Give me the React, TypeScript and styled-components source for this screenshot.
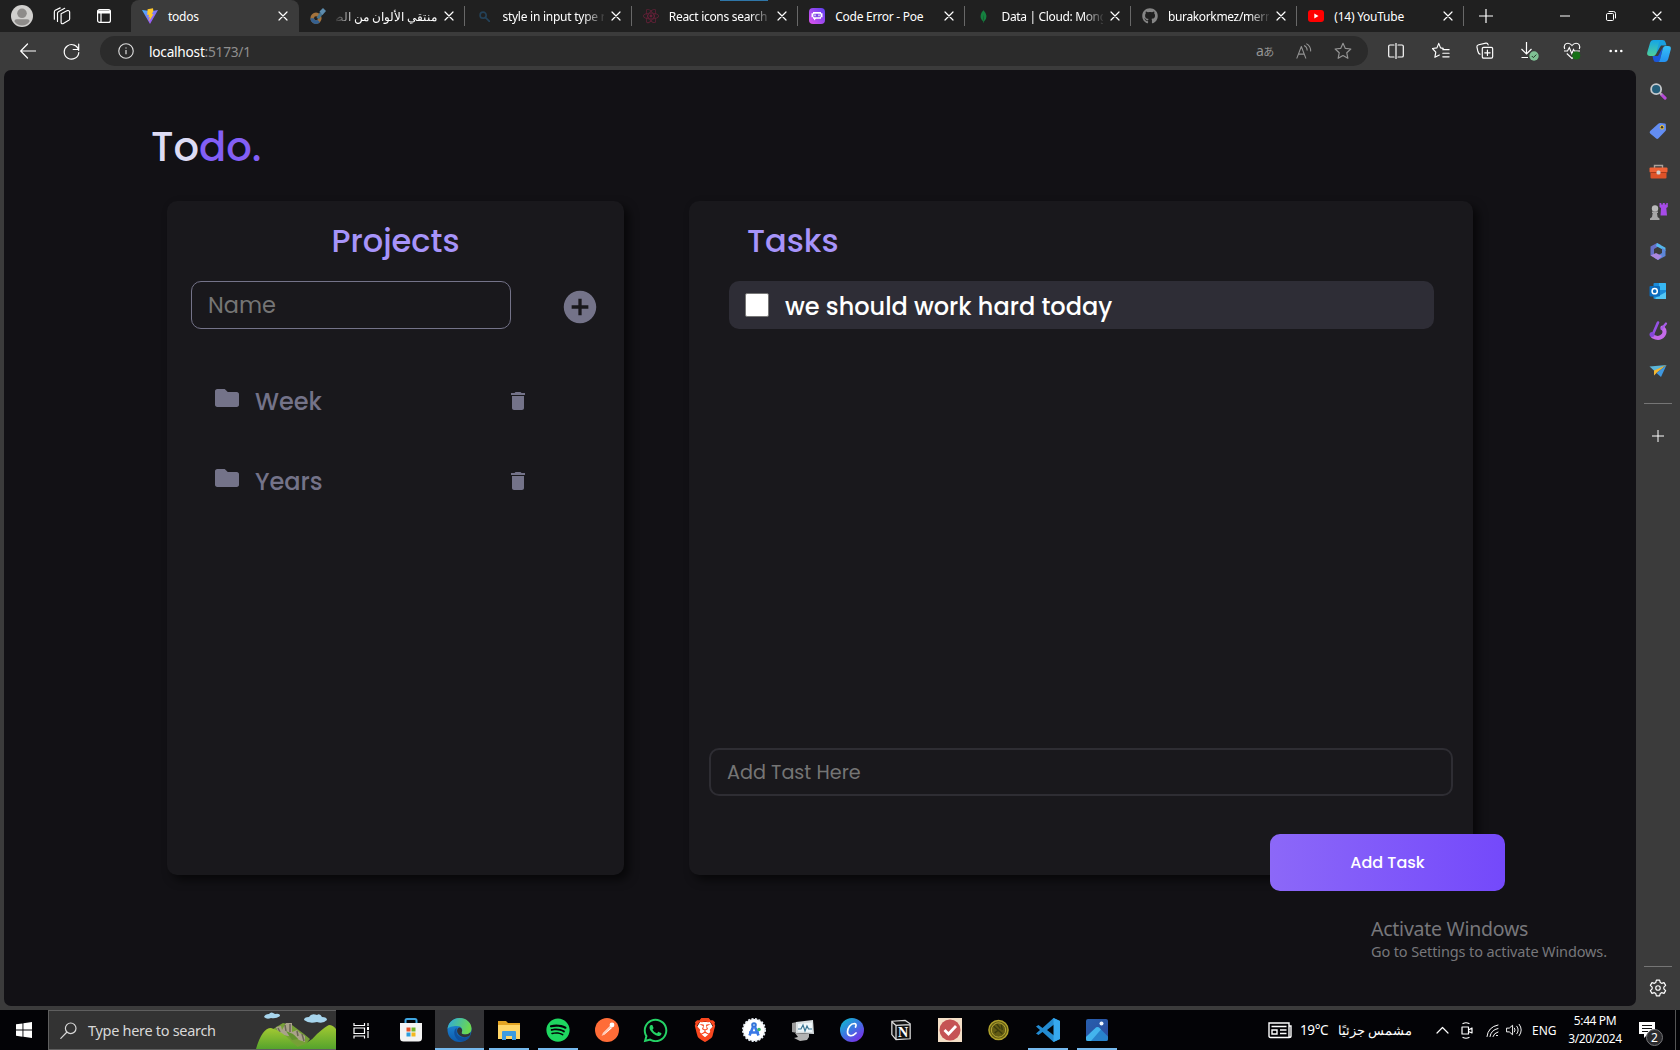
import React from "react";
import styled, { createGlobalStyle, css } from "styled-components";
import { FaFolder, FaGithub, FaSpotify, FaWhatsapp } from "react-icons/fa";
import { MdDelete } from "react-icons/md";
import { IoMdAddCircle } from "react-icons/io";
import { SiBrave, SiMongodb, SiReact } from "react-icons/si";

const ui = `"Segoe UI", "Noto Sans", "Open Sans", sans-serif`;
const geo = `Poppins, Inter, "Open Sans", sans-serif`;

const Global = createGlobalStyle`
  * { box-sizing: border-box; }
  body { margin: 0; background: #3b3b3b; overflow: hidden; }
  svg { display: block; flex: none; }
  button { border: 0; padding: 0; background: none; color: inherit; font: inherit; }
`;

const Desktop = styled.div`
  width: 1680px;
  height: 1050px;
  display: grid;
  grid-template-rows: 32px 38px 940px 40px;
  font-family: ${ui};
  color: #fff;
  background: #3b3b3b;
`;

/* ---------- browser chrome ---------- */
const TabStrip = styled.header`
  display: flex;
  align-items: stretch;
  background: #202020;
`;
const StripTools = styled.div`
  width: 131px;
  display: flex;
  align-items: center;
  padding-left: 11px;
`;
const StripIcon = styled.span<{ $gap: number }>`
  display: flex;
  margin-right: ${(p) => p.$gap}px;
`;
const TabBox = styled.div<{ $active?: boolean; $line?: boolean }>`
  width: ${(p) => (p.$active ? 168 : 166.4)}px;
  flex: none;
  display: flex;
  align-items: center;
  padding: 0 8px 0 11px;
  position: relative;
  background: ${(p) => (p.$active ? "#3b3b3b" : "transparent")};
  border-radius: 8px 8px 0 0;
  ${(p) =>
    p.$line &&
    css`
      &::after {
        content: "";
        position: absolute;
        right: 0;
        top: 6px;
        width: 1px;
        height: 20px;
        background: #686868;
      }
    `}
`;
const Favicon = styled.span`
  width: 16px;
  height: 16px;
  display: grid;
  place-items: center;
  margin-right: 10px;
`;
const TabTitle = styled.span<{ $fade?: boolean; $rtl?: boolean; $ls?: number }>`
  flex: 1;
  min-width: 0;
  padding-top: 1px;
  white-space: nowrap;
  font-size: 12px;
  line-height: 20px;
  letter-spacing: ${(p) => p.$ls ?? -0.25}px;
  direction: ${(p) => (p.$rtl ? "rtl" : "ltr")};
  ${(p) =>
    p.$fade &&
    css`
      mask-image: linear-gradient(to ${p.$rtl ? "left" : "right"}, #000 80%, rgba(0, 0, 0, 0.1) 100%);
    `}
`;
const Close = styled.button`
  width: 16px;
  height: 16px;
  margin-left: 4px;
  display: grid;
  place-items: center;
`;
const NewTab = styled.button`
  width: 44px;
  display: grid;
  place-items: center;
`;
const WindowButtons = styled.div`
  margin-left: auto;
  display: flex;
  align-items: center;
  gap: 36px;
  padding-right: 18px;
`;
const LoadBar = styled.i`
  position: absolute;
  left: 720px;
  top: 0;
  width: 48px;
  height: 1px;
  background: #2f76a8;
`;
const Toolbar = styled.nav`
  display: flex;
  align-items: center;
  background: #3b3b3b;
`;
const NavButtons = styled.div`
  width: 100px;
  display: flex;
  align-items: center;
  gap: 27px;
  padding-left: 20px;
`;
const Address = styled.div`
  width: 1268px;
  height: 30px;
  border-radius: 15px;
  background: #2b2b2b;
  display: flex;
  align-items: center;
  padding: 0 16px 0 18px;
`;
const Url = styled.span`
  margin-left: 15px;
  padding-top: 1px;
  font-size: 13.7px;
  line-height: 20px;
  letter-spacing: -0.25px;
  b { font-weight: 400; color: #fff; }
  color: #8f8f8f;
`;
const AddressTools = styled.div`
  margin-left: auto;
  display: flex;
  align-items: center;
  gap: 22px;
  color: #949494;
`;
const Translate = styled.span`
  font: 14px/16px "Noto Sans", "Noto Sans CJK JP", sans-serif;
  width: 18px;
  letter-spacing: -0.5px;
  white-space: nowrap;
  small { font-size: 11px; }
`;
const ToolIcons = styled.div`
  flex: 1;
  display: grid;
  grid-template-columns: 55px 35px 53px 38px 45px 43px 43px;
  place-items: center;
`;

/* ---------- page ---------- */
const Middle = styled.div`
  display: flex;
  padding-left: 4px;
`;
const Page = styled.main`
  width: 1632px;
  height: 936px;
  background: #121115;
  border-radius: 7px;
  padding: 47px 0 0 147px;
  font-family: ${geo};
  font-feature-settings: "cv11";
  position: relative;
`;
const Logo = styled.h1`
  margin: 0;
  height: 60px;
  font-size: 40px;
  line-height: 60px;
  font-weight: 500;
  color: #dddcf4;
  span { color: #835ff5; }
`;
const Panels = styled.div`
  display: flex;
  gap: 65px;
  padding: 24px 0 0 16px;
`;
const Panel = styled.section<{ $w: number }>`
  width: ${(p) => p.$w}px;
  height: 674px;
  border-radius: 10px;
  background: #19181c;
  box-shadow: 5px 5px 10px rgba(0, 0, 0, 0.6);
  display: flex;
  flex-direction: column;
`;
const PanelTitle = styled.h2<{ $left?: boolean }>`
  margin: 0;
  padding: ${(p) => (p.$left ? "16px 0 0 58px" : "16px 0 0")};
  height: 80px;
  text-align: ${(p) => (p.$left ? "left" : "center")};
  font-size: 32px;
  line-height: 48px;
  font-weight: 500;
  color: #a794fa;
`;
const NameRow = styled.div`
  display: flex;
  align-items: center;
  padding-left: 24px;
  gap: 49px;
  color: #747389;
`;
const Field = styled.input<{ $w: number; $border: string; $size: number }>`
  width: ${(p) => p.$w}px;
  height: 48px;
  padding: 0 16px;
  border: ${(p) => p.$border};
  border-radius: 10px;
  background: transparent;
  outline: 0;
  font-family: ${geo};
  font-size: ${(p) => p.$size}px;
  &::placeholder { color: #757575; }
`;
const AddProject = styled.button`
  margin-top: 4px;
`;
const ProjectList = styled.ul`
  list-style: none;
  margin: 32px 0 0;
  padding: 0 94px 0 48px;
`;
const Project = styled.li`
  height: 80px;
  display: flex;
  align-items: center;
  color: #747389;
  font-size: 24px;
  font-weight: 500;
`;
const ProjectName = styled.span`
  margin: 0 auto 0 16px;
`;
const FolderSlot = styled.span`
  margin-top: -6px;
`;
const TaskRow = styled.label`
  width: 705px;
  height: 48px;
  margin-left: 40px;
  padding-left: 16px;
  border-radius: 10px;
  background: #2e2d36;
  display: flex;
  align-items: center;
  gap: 16px;
  font-size: 24px;
  font-weight: 500;
`;
const TaskText = styled.span`
  padding-top: 2px;
`;
const Check = styled.input`
  appearance: none;
  width: 24px;
  height: 24px;
  margin: 0;
  background: #fff;
  border: 1px solid #767676;
  border-radius: 2px;
`;
const TaskEntry = styled.div`
  margin: auto 0 79px 20px;
`;
const AddTask = styled.button`
  position: absolute;
  left: 1266px;
  top: 764px;
  width: 235px;
  height: 57px;
  border-radius: 10px;
  background: linear-gradient(to right, #8c68f8, #7449fb);
  color: #fff;
  font-size: 16px;
  font-weight: 500;
`;
const Watermark = styled.aside`
  position: absolute;
  left: 1367px;
  top: 846px;
  font-family: ${ui};
  color: #77777b;
  white-space: nowrap;
  p { margin: 0; }
`;
const MarkTitle = styled.p`
  font-size: 19.5px;
  line-height: 26px;
  letter-spacing: -0.25px;
`;
const MarkText = styled.p`
  font-size: 14.5px;
  line-height: 18px;
  letter-spacing: -0.12px;
`;

/* ---------- edge sidebar ---------- */
const Sidebar = styled.aside`
  width: 44px;
  height: 940px;
  padding-top: 1px;
  display: flex;
  flex-direction: column;
  align-items: center;
`;
const SideItem = styled.span`
  height: 40px;
  display: grid;
  place-items: center;
`;
const Rule = styled.hr`
  width: 28px;
  height: 1px;
  border: 0;
  margin: 12px 0;
  background: #757575;
`;
const SideFoot = styled.div`
  margin-top: auto;
  padding-bottom: 13px;
  display: flex;
  flex-direction: column;
  align-items: center;
`;

/* ---------- taskbar ---------- */
const Taskbar = styled.footer`
  display: flex;
  background: #030306;
`;
const Start = styled.button`
  width: 48px;
  display: grid;
  place-items: center;
`;
const Search = styled.div`
  width: 288px;
  display: flex;
  align-items: center;
  background: #333;
  border: 1px solid #5f5f5f;
  border-right: 0;
  padding-left: 11px;
  color: #d8d8d8;
  font-size: 14.5px;
`;
const SearchLabel = styled.span`
  margin-left: 11px;
  white-space: nowrap;
  letter-spacing: -0.3px;
`;
const ArtSlot = styled.span`
  margin-left: auto;
`;
const Apps = styled.div`
  display: flex;
  padding-left: 1px;
`;
const AppCell = styled.button<{ $open?: boolean; $active?: boolean }>`
  width: 49px;
  flex: none;
  display: grid;
  place-items: center;
  background: ${(p) => (p.$active ? "#333336" : "transparent")};
  ${(p) =>
    p.$open &&
    css`
      background-image: linear-gradient(#76b9ed, #76b9ed);
      background-repeat: no-repeat;
      background-position: center bottom;
      background-size: ${p.$active ? "49px" : "40px"} 2px;
    `}
`;
const Tray = styled.div`
  margin-left: auto;
  display: flex;
  align-items: center;
  font-size: 12px;
`;
const TraySlot = styled.span<{ $w: number }>`
  width: ${(p) => p.$w}px;
  display: flex;
  align-items: center;
  white-space: nowrap;
`;
const Temp = styled(TraySlot)`
  font-size: 13.5px;
  letter-spacing: -0.4px;
`;
const Weather = styled(TraySlot)`
  direction: rtl;
  font-size: 13px;
`;
const Clock = styled.div`
  width: 66px;
  text-align: center;
  font-size: 12px;
  line-height: 18px;
  letter-spacing: -0.4px;
  margin-right: 11px;
`;
const Notice = styled.span`
  width: 36px;
  height: 40px;
`;
const ShowDesktop = styled.i`
  width: 5px;
  height: 40px;
  border-left: 1px solid #555;
`;

type LineProps = { w: number; h?: number; d: string; box?: string; sw?: number; color?: string; fill?: string };
const Line = ({ w, h = w, d, box = "0 0 20 20", sw = 1.2, color = "currentColor", fill = "none" }: LineProps) => (
  <svg width={w} height={h} viewBox={box} fill={fill} stroke={color} strokeWidth={sw} strokeLinecap="round" strokeLinejoin="round">
    <path d={d} />
  </svg>
);

const CloseX = () => <Line w={10} box="0 0 10 10" d="M1 1l8 8M9 1L1 9" sw={1.2} />;

const Vite = () => (
  <svg width="16" height="16" viewBox="0 0 16 16">
    <defs>
      <linearGradient id="vt" x1="0" y1="0" x2="1" y2="1"><stop stopColor="#41b8ff" /><stop offset="1" stopColor="#c034f0" /></linearGradient>
    </defs>
    <path d="M0 2l8 14L16 2 9 3.2 4 2.6z" fill="url(#vt)" />
    <path d="M11 .2L5.6 1.3 5.2 7l1.8-.3-.6 2.7 1.4-.4L7 13.4 11.6 6l-1.9.3L11.4 3z" fill="#ffc72b" />
  </svg>
);
const Picker = () => (
  <svg width="16" height="16" viewBox="0 0 16 16">
    <circle cx="6" cy="10.200" r="3.800" fill="none" stroke="#a4733c" strokeWidth="3.600" />
    <path d="M2.200 10.200a3.800 3.800 0 0 0 6.500 2.700" fill="none" stroke="#35608f" strokeWidth="3.600" />
    <path d="M6.500 10l3.500-6 3 2-4 5z" fill="#47748f" /><path d="M9.500 3.500L13 0l3 3-3.500 4z" fill="#5d8cae" />
  </svg>
);
const Poe = () => (
  <svg width="16" height="16" viewBox="0 0 16 16">
    <defs><linearGradient id="poe" x1="1" y1="0" x2="0" y2="1"><stop stopColor="#5b3ff0" /><stop offset="1" stopColor="#e254ee" /></linearGradient></defs>
    <rect width="16" height="16" rx="4" fill="url(#poe)" />
    <path d="M4 4h8v1.200h1.500v4H12v1.600H7L5 12.500v-1.700H4V9.200H2.500v-4H4z" fill="#fff" />
    <rect x="4.400" y="5.700" width="7.200" height="3.500" rx="1" fill="#8148e8" />
    <path d="M6 6.500v1.800M10 6.500v1.800" stroke="#fff" strokeWidth="1.200" />
  </svg>
);
const Tube = () => (
  <svg width="16" height="12" viewBox="0 0 16 12"><rect width="16" height="12" rx="3" fill="#f00" /><path d="M6.300 3.500v5L10.500 6z" fill="#fff" /></svg>
);

const tabs: { title: string; icon: React.ReactNode; active?: boolean; fade?: boolean; rtl?: boolean; ls?: number }[] = [
  { title: "todos", icon: <Vite />, active: true },
  { title: "منتقي الألوان من الص", icon: <Picker />, fade: true, rtl: true, ls: 0 },
  { title: "style in input type r", icon: <Line w={11} d="M12 12l7 7M13 7.500a5.500 5.500 0 1 1-11 0a5.500 5.500 0 1 1 11 0" sw={3} color="#244259" />, fade: true },
  { title: "React icons search i", icon: <SiReact size={16} color="#682039" />, fade: true, ls: -0.3 },
  { title: "Code Error - Poe", icon: <Poe /> },
  { title: "Data | Cloud: Mong", icon: <SiMongodb size={13} color="#15803f" />, fade: true, ls: -0.35 },
  { title: "burakorkmez/mern", icon: <FaGithub size={16} color="#858585" />, fade: true, ls: -0.35 },
  { title: "(14) YouTube", icon: <Tube /> },
];

const Avatar = () => (
  <svg width="22" height="22" viewBox="0 0 23 23">
    <circle cx="11.500" cy="11.500" r="11.500" fill="#d1d0ce" /><circle cx="11.500" cy="8.700" r="5" fill="#8e8c8a" />
    <path d="M3.500 17q0-2 2.500-2h11q2.500 0 2.500 2-3 4.500-8 4.500t-8-4.500z" fill="#8e8c8a" />
  </svg>
);
const Copilot = () => (
  <svg width="24" height="22" viewBox="0 0 24 22">
    <defs>
      <linearGradient id="cp1" x1="0" y1="0" x2="0" y2="1"><stop stopColor="#14a5e8" /><stop offset="1" stopColor="#4fd09a" /></linearGradient>
      <linearGradient id="cp2" x1="0" y1="0" x2="0" y2="1"><stop stopColor="#35c0f7" /><stop offset="1" stopColor="#2490f0" /></linearGradient>
    </defs>
    <path d="M7 0h8.500q2.500 0 3 2.200L19.500 5.500H14L9 14z" fill="#18a0e0" />
    <path d="M5.500 16H11l5-9-3 13q-.5 2-2.500 2H9q-2.200 0-2.700-2.500z" fill="#1b55d8" />
    <path d="M6.500 0H14q-1.500.5-2 2.500L9 14q-.6 2-2.800 2H3Q-.6 16 .3 12.200L3 3Q3.800 0 6.500 0z" fill="url(#cp1)" />
    <path d="M17.500 22H11q1.500-.5 2-2.500L16 8q.6-2 2.500-2H21q3.600 0 2.700 3.800L21.200 19Q20.300 22 17.500 22z" fill="url(#cp2)" />
  </svg>
);
const Downloads = () => (
  <svg width="20" height="20" viewBox="0 0 20 20" fill="none">
    <path d="M6.500 1v11.500M1.500 8l5 5 5-5M1.500 16.500H8" stroke="#fff" strokeWidth="1.200" />
    <circle cx="14" cy="15" r="4.700" fill="#7fc294" /><path d="M11.800 15l1.600 1.600 2.900-3" stroke="#263b2c" />
  </svg>
);
const HeartPulse = () => (
  <svg width="18" height="18" viewBox="0 0 18 18" fill="none">
    <path d="M1.700 7C.4 3.500 2.300 1.200 5 1.200 7 1.200 8 2.200 9 3.500 10 2.200 11 1.200 13 1.200c2.700 0 4.600 2.300 3.300 5.800M1 9h3.500l1.800-3.500 2.500 6L10.500 7.500l1 1.500H17M3.800 11.500L9 16.500l1.500-1.300" stroke="#fff" strokeWidth="1.100" />
    <circle cx="13.300" cy="13.500" r="4" fill="#157016" />
  </svg>
);

const side: React.ReactNode[] = [
  <svg width="17" height="17" viewBox="0 0 18 18"><path d="M12 12l4 4" stroke="#b64bd8" strokeWidth="3.200" strokeLinecap="round" /><path d="M10.500 10.500l2 2" stroke="#aaa" strokeWidth="2" /><circle cx="6.500" cy="6.500" r="5.300" fill="#245e7a" stroke="#c6c9cc" strokeWidth="1.900" /></svg>,
  <svg width="18" height="18" viewBox="0 0 18 18"><path d="M9 2Q10 1 11.300 1L15.800 1.500Q16.800 1.600 16.800 2.600L17 7.500q0 1-.8 1.800l-6.700 7q-1.300 1.200-2.600 0L1.200 11.500q-1.200-1.200 0-2.400z" fill="#638df2" /><circle cx="13" cy="5.300" r="1.800" fill="#333" stroke="#f4c430" /></svg>,
  <svg width="19" height="15" viewBox="0 0 19 15"><path d="M5.500 4V1.500h8V4" fill="none" stroke="#aaa19b" strokeWidth="1.400" /><rect x=".5" y="3.500" width="18" height="5" rx="1" fill="#ef6236" /><rect x="1.500" y="8.500" width="16" height="6" rx="1" fill="#dd5228" /><path d="M1.500 8.500h16" stroke="#a83a1a" /><rect x="7.500" y="6.500" width="4" height="4" rx="1.500" fill="#d3d0cd" /></svg>,
  <svg width="19" height="19" viewBox="0 0 19 19"><path d="M10.500 1h1.800v1.500h1.500V1h2v1.500h1.500V1h1.500v4l-1.500 1 .7 7.500H11.500L12 6l-1.500-1z" fill="#a64be8" /><circle cx="6" cy="6.500" r="3.200" fill="#b9b9b9" /><path d="M3 9.500h6v1.500H8l.6 4 1.900 1.500V18H1v-1.500L3 15l.7-4H3z" fill="#a6a6a6" /></svg>,
  <svg width="18" height="19" viewBox="0 0 18 19"><path d="M8 1L1.500 4.500v9L5 15V7l7-4z" fill="#6670c8" /><path d="M8 1l8.500 4.700V9L7 4z" fill="#55b7ec" /><path d="M16.500 8v6L9 18l-4-2.500 8-4.500V6z" fill="#5c86d8" /><path d="M1.500 13.500L9 18l4-4-6-3z" fill="#ab87df" /></svg>,
  <svg width="18" height="18" viewBox="0 0 18 18"><rect x="4.500" y="1" width="12.500" height="16" rx="1" fill="#1b8bd8" /><path d="M10 1h6q1 0 1 1v6h-7z" fill="#37b7f2" /><path d="M6 16l11-6v7H7z" fill="#54c7f5" /><rect x=".5" y="4" width="10.500" height="10.500" rx="1" fill="#0b6cbd" /><circle cx="5.700" cy="9.200" r="2.600" fill="none" stroke="#fff" strokeWidth="1.500" /></svg>,
  <svg width="19" height="20" viewBox="0 0 19 20"><path d="M13.500 6.500q3.500 3.500 1 7.500-4 5-10.500 1.500" fill="none" stroke="#c56bea" strokeWidth="4" strokeLinecap="round" /><path d="M9 1.500L4 13" stroke="#9552e5" strokeWidth="2.600" strokeLinecap="round" /><path d="M12.500 8l4.500-5.500" stroke="#a75ce8" strokeWidth="2.200" strokeLinecap="round" /><circle cx="3" cy="13.500" r="2.500" fill="#8747dc" /></svg>,
  <svg width="18" height="14" viewBox="0 0 18 14"><path d="M.5 2.500L17.500 1 5.500 7z" fill="#5bb5d8" /><path d="M17.500 1L5 6.500V11.500l2.500-2.500z" fill="#f2b632" /><path d="M17.500 1L7.500 9 12 13z" fill="#3f98e0" /></svg>,
];

const Landscape = () => (
  <svg width="80" height="38" viewBox="0 0 80 38">
    <defs>
      <linearGradient id="hill" x1="0" y1="0" x2="0" y2="1"><stop stopColor="#a3c932" /><stop offset="1" stopColor="#55a32c" /></linearGradient>
    </defs>
    <path d="M8 6q1-3 5-3 2-3 6 0 5-1 5 2-4 3-9 2-4 2-7-1zM48 9q0-3 5-3 2-4 8-2 3-2 5 2 5 0 5 3-4 4-10 2-8 2-13-2z" fill="#a7d5ed" />
    <path d="M14 20l8-5 5-3 9 2 12 9 6 5-8 10H22z" fill="#76a036" />
    <path d="M20 16l5-1 1 4 4-7h6v9l5-2 3 3 5 3v6l-6-2-5-5-6 1-9-2z" fill="#aaa28b" />
    <path d="M22 17l2 4M29 14l1 6M34 13v8M41 20l1 5M46 23l2 7" stroke="#696655" strokeWidth="1.500" />
    <path d="M30 20l7 3 5 5-6 1z" fill="#62922f" />
    <path d="M0 38Q6 17 15 17q11 3 21 14l8 7z" fill="url(#hill)" />
    <path d="M32 38q20-3 29-15 9-8 12-9 4 0 7 4v20z" fill="url(#hill)" />
  </svg>
);
const Store = () => (
  <svg width="24" height="24" viewBox="0 0 24 24"><path d="M6.500 6V2.500q0-1.500 1.500-1.500h8q1.500 0 1.500 1.500V6" fill="none" stroke="#3ea5e0" strokeWidth="2" /><path d="M1 5h22v15q0 3.500-3.500 3.500h-15Q1 23.500 1 20z" fill="#f3f3f3" /><path d="M7.500 9.500h4v4h-4z" fill="#e44f28" /><path d="M12.500 9.500h4v4h-4z" fill="#75b62a" /><path d="M7.500 14.500h4v4h-4z" fill="#2a9ddd" /><path d="M12.500 14.500h4v4h-4z" fill="#f4b91f" /></svg>
);
const EdgeLogo = () => (
  <svg width="25" height="24" viewBox="0 0 24 24">
    <defs>
      <linearGradient id="e1" x1="0" y1="0" x2="1" y2=".3"><stop stopColor="#2da9e1" /><stop offset="1" stopColor="#6bd850" /></linearGradient>
      <linearGradient id="e2" x1="0" y1="0" x2="0" y2="1"><stop stopColor="#2390dc" /><stop offset="1" stopColor="#0c5bad" /></linearGradient>
    </defs>
    <circle cx="12" cy="12" r="12" fill="url(#e2)" />
    <path d="M0 11C1 4 6 0 12 0c7 0 12 5 12 10.500 0 4-3 6-6.500 6-3 0-4-1-3.500-2 2-3 0-6.500-4.500-6.500C5 8 1 9 0 11z" fill="url(#e1)" />
    <path d="M9 9.500q-4 4-1 9.500t10 3.500q3-1 5-4.500-4 2-8 1.500-6-1-6-6z" fill="#10509c" />
    <path d="M14.300 14.200q-1 2 3.200 2.300 3.500 0 5.500-2.300-.2 2-1.200 3.800-4 2-7.800.5-4-2-4.500-5.500.5-4 3-3.500 3 1.500 1.800 4.700z" fill="#333336" />
  </svg>
);
const Explorer = () => (
  <svg width="24" height="20" viewBox="0 0 24 20"><path d="M1 1h8l2 2h12v16H1z" fill="#e3a423" /><path d="M1 5h22v14H1z" fill="#ffd668" /><path d="M5 20v-8q0-1 1-1h12q1 0 1 1v8h-4v-4H9v4z" fill="#3d9bdf" /></svg>
);
const Postman = () => (
  <svg width="24" height="24" viewBox="0 0 24 24"><circle cx="12" cy="12" r="12" fill="#ff6c37" /><circle cx="17" cy="7" r="2.400" fill="#fff" /><path d="M15 8l2 2-7.500 6.500-3 1.500L8 15z" fill="#fff" /><path d="M6.500 18l9-9" stroke="#ff6c37" strokeWidth=".7" /></svg>
);
const Studio = () => (
  <svg width="24" height="24" viewBox="0 0 24 24"><circle cx="12" cy="12" r="11" fill="#fff" stroke="#e8eef4" strokeWidth="2" strokeDasharray="2 1.500" /><circle cx="12" cy="7" r="1.800" fill="none" stroke="#3274d9" strokeWidth="2" /><path d="M11 9L7.500 17.500M13 9l3.500 8.500M7 14.500h10" stroke="#3978e6" strokeWidth="2.600" /><circle cx="17" cy="11.500" r="1.800" fill="#36b36a" /></svg>
);
const Monitor = () => (
  <svg width="24" height="22" viewBox="0 0 24 22"><path d="M1 4l5-1v11l-5-1z" fill="#9b9b9b" /><path d="M5 3l17-2 1 14-18-1z" fill="#d8dee0" /><path d="M7 5l14-1.500V13L7 12.500z" fill="#eff7fa" /><path d="M7 10h3l2-4 2 6 2-5 1.500 3H21" fill="none" stroke="#3b7694" strokeWidth="1.200" /><path d="M4 14l14 1v3l-2 3-7 1-6-3 4-1z" fill="#b3b3b3" /></svg>
);
const Canva = () => (
  <svg width="24" height="24" viewBox="0 0 24 24"><defs><linearGradient id="cv" x1="0" y1="0" x2=".8" y2="1"><stop stopColor="#08c3cc" /><stop offset=".5" stopColor="#3a79e0" /><stop offset="1" stopColor="#7d2ae8" /></linearGradient></defs><circle cx="12" cy="12" r="12" fill="url(#cv)" /><path d="M15.500 9q1.500-3-1-3.500c-4 0-7 4.500-7 8.500s4.500 5.500 8.500 1" fill="none" stroke="#fff" strokeWidth="1.700" strokeLinecap="round" /></svg>
);
const Approved = () => (
  <svg width="24" height="24" viewBox="0 0 24 24"><path d="M0 0h24v24H0z" fill="#f4dfc7" /><circle cx="12" cy="12" r="10.500" fill="#c55354" /><path d="M6.500 12l4 4 7.500-8" fill="none" stroke="#fff" strokeWidth="2.800" /></svg>
);
const Coin = () => (
  <svg width="21" height="22" viewBox="0 0 22 22"><circle cx="11" cy="11" r="10" fill="#625b13" stroke="#afa12a" strokeWidth="1.600" /><circle cx="11" cy="11" r="7.500" fill="none" stroke="#b9aa35" /><path d="M6 7l9 8M9 4.500l4 5M7 14l4-3M14 6l1 5" stroke="#3b3b0c" strokeWidth="1.400" /></svg>
);
const Code = () => (
  <svg width="24" height="24" viewBox="0 0 24 24"><path d="M17.500 0L24 3v18l-6.500 3-11-10-4 3L0 15.500l4-3.500-4-3.500L2.500 7l4 3zM18 6.500L11 12l7 5.500z" fill="#238bd1" fillRule="evenodd" /><path d="M17.500 0L24 3v18l-6.500 3z" fill="#36a8ef" /></svg>
);
const Photos = () => (
  <svg width="22" height="22" viewBox="0 0 22 22"><defs><linearGradient id="ph" x1="0" y1="0" x2="1" y2="1"><stop stopColor="#275fae" /><stop offset="1" stopColor="#2c4b9d" /></linearGradient></defs><rect width="22" height="22" rx="2" fill="url(#ph)" /><path d="M0 18L10 8.500q1.500-1.200 3 0l9 9V20q0 2-2 2H2q-2 0-2-2z" fill="#2882cb" /><path d="M0 18L10 8.500q1.500-1.200 3 0l2 2L5 22H2q-2 0-2-2z" fill="#43b4ed" /><circle cx="15.500" cy="4.500" r="2" fill="#f1f7ff" /></svg>
);
const TaskView = () => (
  <svg width="17" height="17" viewBox="0 0 17 17" fill="none" stroke="#fff" strokeWidth="1.200"><path d="M1 1v2.500h10.500V1M1 6h10.500v5.500H1zM1 16.500V14h10.500v2.500M15 1v3M15 9v7" /><path d="M14 5h2v3h-2z" fill="#fff" stroke="none" /></svg>
);
const NotionIcon = () => (
  <svg width="20" height="22" viewBox="0 0 24 24"><path d="M1 1.500L17 .5l6 4v18L6 23.500l-5-6zM6 6.500L1 2M6 6.500V23M6 6.500l17-1" fill="#111" stroke="#ddd" strokeWidth="1.500" /><text x="14.500" y="20.500" textAnchor="middle" fontFamily="Liberation Serif, serif" fontWeight="700" fontSize="17" fill="#fff">N</text></svg>
);
const BraveIcon = () => (
  <svg width="22" height="24" viewBox="0 0 22 24"><path d="M6 4h10l3 5-4 11-4 2-4-2L3 9z" fill="#fff" /><g transform="translate(-1 0)"><SiBrave size={24} color="#f9471f" /></g></svg>
);

const apps: { icon: React.ReactNode; open?: boolean; active?: boolean }[] = [
  { icon: <TaskView /> },
  { icon: <Store /> },
  { icon: <EdgeLogo />, open: true, active: true },
  { icon: <Explorer />, open: true },
  { icon: <FaSpotify size={24} color="#1ed760" />, open: true },
  { icon: <Postman /> },
  { icon: <FaWhatsapp size={27} color="#25d366" /> },
  { icon: <BraveIcon /> },
  { icon: <Studio /> },
  { icon: <Monitor /> },
  { icon: <Canva /> },
  { icon: <NotionIcon /> },
  { icon: <Approved /> },
  { icon: <Coin /> },
  { icon: <Code />, open: true },
  { icon: <Photos />, open: true },
];

export default function App() {
  return (
    <Desktop>
      <Global />
      <TabStrip>
        <StripTools>
          <StripIcon $gap={20}><Avatar /></StripIcon>
          <StripIcon $gap={26}>
            <Line w={18} d="M9 7.500l7-3.500q2-.5 2.500 1.500V13q0 1.200-1 1.800L11 18.500q-2 .5-2-1.500zM5 16V7q0-1.200 1-1.800L13 1.500M1.500 13.500V5.500q0-1.200 1-1.800L8 1" sw={1.300} />
          </StripIcon>
          <StripIcon $gap={0}>
            <svg width="14" height="14" viewBox="0 0 14 14" fill="none" stroke="#fff" strokeWidth="1.200"><rect x=".6" y=".6" width="12.800" height="12.800" rx="2" /><path d="M1 2h12v2H1zM4 4v9" fill="#fff" /></svg>
          </StripIcon>
        </StripTools>
        {tabs.map((t, i) => (
          <TabBox key={t.title} $active={t.active} $line={i > 0}>
            <Favicon>{t.icon}</Favicon>
            <TabTitle $fade={t.fade} $rtl={t.rtl} $ls={t.ls}>{t.title}</TabTitle>
            <Close><CloseX /></Close>
          </TabBox>
        ))}
        <NewTab><Line w={14} box="0 0 14 14" d="M7 0v14M0 7h14" /></NewTab>
        <WindowButtons>
          <Line w={10} box="0 0 10 10" d="M0 5h10" />
          <Line w={10} box="0 0 10 10" d="M.5 3.500q0-1 1-1h5q1 0 1 1v5q0 1-1 1h-5q-1 0-1-1zM3 .5h4.500q2 0 2 2V7" sw={1} />
          <CloseX />
        </WindowButtons>
      </TabStrip>
      <LoadBar />
      <Toolbar>
        <NavButtons>
          <Line w={16} box="0 0 16 16" d="M16 8H.7M7.500 1L.7 8l6.800 7" />
          <Line w={17} box="0 0 17 17" d="M15.700 7.500A7.300 7.300 0 1 0 15.800 9.500M15.700 1v5.500h-5.500" />
        </NavButtons>
        <Address>
          <svg width="16" height="16" viewBox="0 0 17 17" fill="none" stroke="#ddd"><circle cx="8.500" cy="8.500" r="7.700" strokeWidth="1.200" /><path d="M8.500 7.500V12M8.500 4.700v1.200" strokeWidth="1.300" /></svg>
          <Url><b>localhost</b>:5173/1</Url>
          <AddressTools>
            <Translate>a<small>あ</small></Translate>
            <Line w={16} box="0 0 18 18" d="M1 17L6 4l5 13M2.800 12.500h6.500M9.500 3q3 1.500 3 5M12 1q4.500 2.500 4.500 8" />
            <Line w={18} d="M10 1.500l2.600 5.600 6.100.7-4.500 4.200 1.200 6.100-5.400-3.100-5.400 3.100 1.200-6.100L1.300 7.800l6.100-.7z" sw={1.300} />
          </AddressTools>
        </Address>
        <ToolIcons>
          <Line w={16} box="0 0 16 16" d="M8 0v16M6 2H2Q.7 2 .7 3.300v9.400Q.7 14 2 14h4M10 2h4q1.300 0 1.300 1.300v9.400q0 1.300-1.300 1.300h-4" />
          <Line w={18} d="M12.500 7L9.500 6.500 7.500 1.500 5.500 6.500l-5 .7 3.700 4-1 5.800 5-2.500M12 8.500h7M12 12.500h7M12 16.500h7" sw={1.300} />
          <Line w={18} d="M7 7.500q0-1.500 1.500-1.500h8.500q1.500 0 1.500 1.500v9q0 1.500-1.500 1.500H8.500Q7 18 7 16.500zM12.700 9v6M9.700 12h6M4.500 13.500Q3 13.500 2 10L1 5.500Q.8 3.500 3 3l8-1.700q2-.3 2.500 2" sw={1.300} />
          <Downloads />
          <HeartPulse />
          <svg width="14" height="4" viewBox="0 0 14 4" fill="#fff"><circle cx="1.700" cy="2" r="1.300" /><circle cx="7" cy="2" r="1.300" /><circle cx="12.300" cy="2" r="1.300" /></svg>
          <Copilot />
        </ToolIcons>
      </Toolbar>
      <Middle>
        <Page>
          <Logo>To<span>do.</span></Logo>
          <Panels>
            <Panel $w={457}>
              <PanelTitle>Projects</PanelTitle>
              <NameRow>
                <Field $w={320} $border="1px solid #747389" $size={22.4} placeholder="Name" />
                <AddProject><IoMdAddCircle size={40} /></AddProject>
              </NameRow>
              <ProjectList>
                {["Week", "Years"].map((name) => (
                  <Project key={name}>
                    <FolderSlot><FaFolder size={24} /></FolderSlot>
                    <ProjectName>{name}</ProjectName>
                    <MdDelete size={24} />
                  </Project>
                ))}
              </ProjectList>
            </Panel>
            <Panel $w={784}>
              <PanelTitle $left>Tasks</PanelTitle>
              <TaskRow><Check type="checkbox" /><TaskText>we should work hard today</TaskText></TaskRow>
              <TaskEntry>
                <Field $w={744} $border="2px solid #2e2d33" $size={19.2} placeholder="Add Tast Here" />
              </TaskEntry>
            </Panel>
          </Panels>
          <AddTask>Add Task</AddTask>
          <Watermark>
            <MarkTitle>Activate Windows</MarkTitle>
            <MarkText>Go to Settings to activate Windows.</MarkText>
          </Watermark>
        </Page>
        <Sidebar>
          {side.map((icon, i) => <SideItem key={i}>{icon}</SideItem>)}
          <Rule />
          <SideItem><Line w={12} box="0 0 12 12" d="M6 0v12M0 6h12" sw={1} /></SideItem>
          <SideFoot>
            <Rule />
            <Line w={18} d="M8.200 1.200h3.600l.7 2.700 1.500.9 2.700-.8 1.800 3.100-2 1.900v2l2 1.900-1.800 3.100-2.700-.8-1.500.9-.7 2.700H8.200l-.7-2.700-1.500-.9-2.700.8-1.800-3.100 2-1.900V9l-2-1.900L3.300 4l2.700.8 1.500-.9zM12.500 10a2.500 2.500 0 1 1-5 0a2.500 2.500 0 1 1 5 0" sw={1.300} />
          </SideFoot>
        </Sidebar>
      </Middle>
      <Taskbar>
        <Start><svg width="16" height="16" viewBox="0 0 16 16" fill="#fff"><path d="M0 2.300L6.500 1.400v6.200H0zM7.400 1.200L16 0v7.600H7.400zM0 8.500h6.500v6.200L0 13.800zM7.400 8.500H16V16l-8.600-1.200z" /></svg></Start>
        <Search>
          <Line w={17} box="0 0 17 17" d="M6.500 10.500L.8 16.300M16 6.300a5.300 5.300 0 1 1-10.600 0a5.300 5.300 0 1 1 10.600 0" />
          <SearchLabel>Type here to search</SearchLabel>
          <ArtSlot><Landscape /></ArtSlot>
        </Search>
        <Apps>
          {apps.map((a, i) => <AppCell key={i} $open={a.open} $active={a.active}>{a.icon}</AppCell>)}
        </Apps>
        <Tray>
          <TraySlot $w={32}>
            <svg width="24" height="17" viewBox="0 0 24 17" fill="none" stroke="#fff" strokeWidth="1.400"><path d="M1 1h20v14.500H2.500Q1 15.500 1 14zM21 4h2v10q0 1.500-2 1.500M3.500 4.500h15M12 8h6.500M12 11.500h6.500" /><path d="M4 8h5v4H4z" /></svg>
          </TraySlot>
          <Temp $w={39}>19°C</Temp>
          <Weather $w={73}>مشمس جزئيًا</Weather>
          <TraySlot $w={24} />
          <TraySlot $w={25}><Line w={13} h={8} box="0 0 13 8" d="M1 7l5.500-5.500L12 7" /></TraySlot>
          <TraySlot $w={25}><Line w={12} h={17} box="0 0 12 17" d="M1 5h6.500v7H1zM7.500 8l3.500-2v5L7.500 9.500M2 1.500Q5 0 8 1.500M2 15.500q3 1.500 6 0" /></TraySlot>
          <TraySlot $w={20}><Line w={13} box="0 0 13 13" d="M1 12.500Q2 3 12 1M4 12.500Q5 6 12 4.500M7 12.500Q8 9 12 8M10.500 11.500h1" sw={1} /></TraySlot>
          <TraySlot $w={26}><Line w={16} h={14} box="0 0 17 14" d="M1 5h2.500L7 2v10L3.500 9H1zM9 5q1.500 2 0 4M11.500 3q3 4 0 8M14 1q4.500 6 0 12" sw={1} /></TraySlot>
          <TraySlot $w={30}>ENG</TraySlot>
          <Clock>5:44 PM<br />3/20/2024</Clock>
          <Notice>
            <svg width="26" height="40" viewBox="0 0 26 40"><path d="M0 12h16v12H9l-4 4v-4H0z" fill="#fff" /><path d="M3 15.500h10M3 18.500h10M3 21.500h6" stroke="#111" /><circle cx="15.500" cy="27.500" r="8" fill="#2b2b2e" stroke="#77777a" /><text x="15.500" y="32" textAnchor="middle" fontFamily="Noto Sans, sans-serif" fontSize="12" fill="#fff">2</text></svg>
          </Notice>
          <ShowDesktop />
        </Tray>
      </Taskbar>
    </Desktop>
  );
}
